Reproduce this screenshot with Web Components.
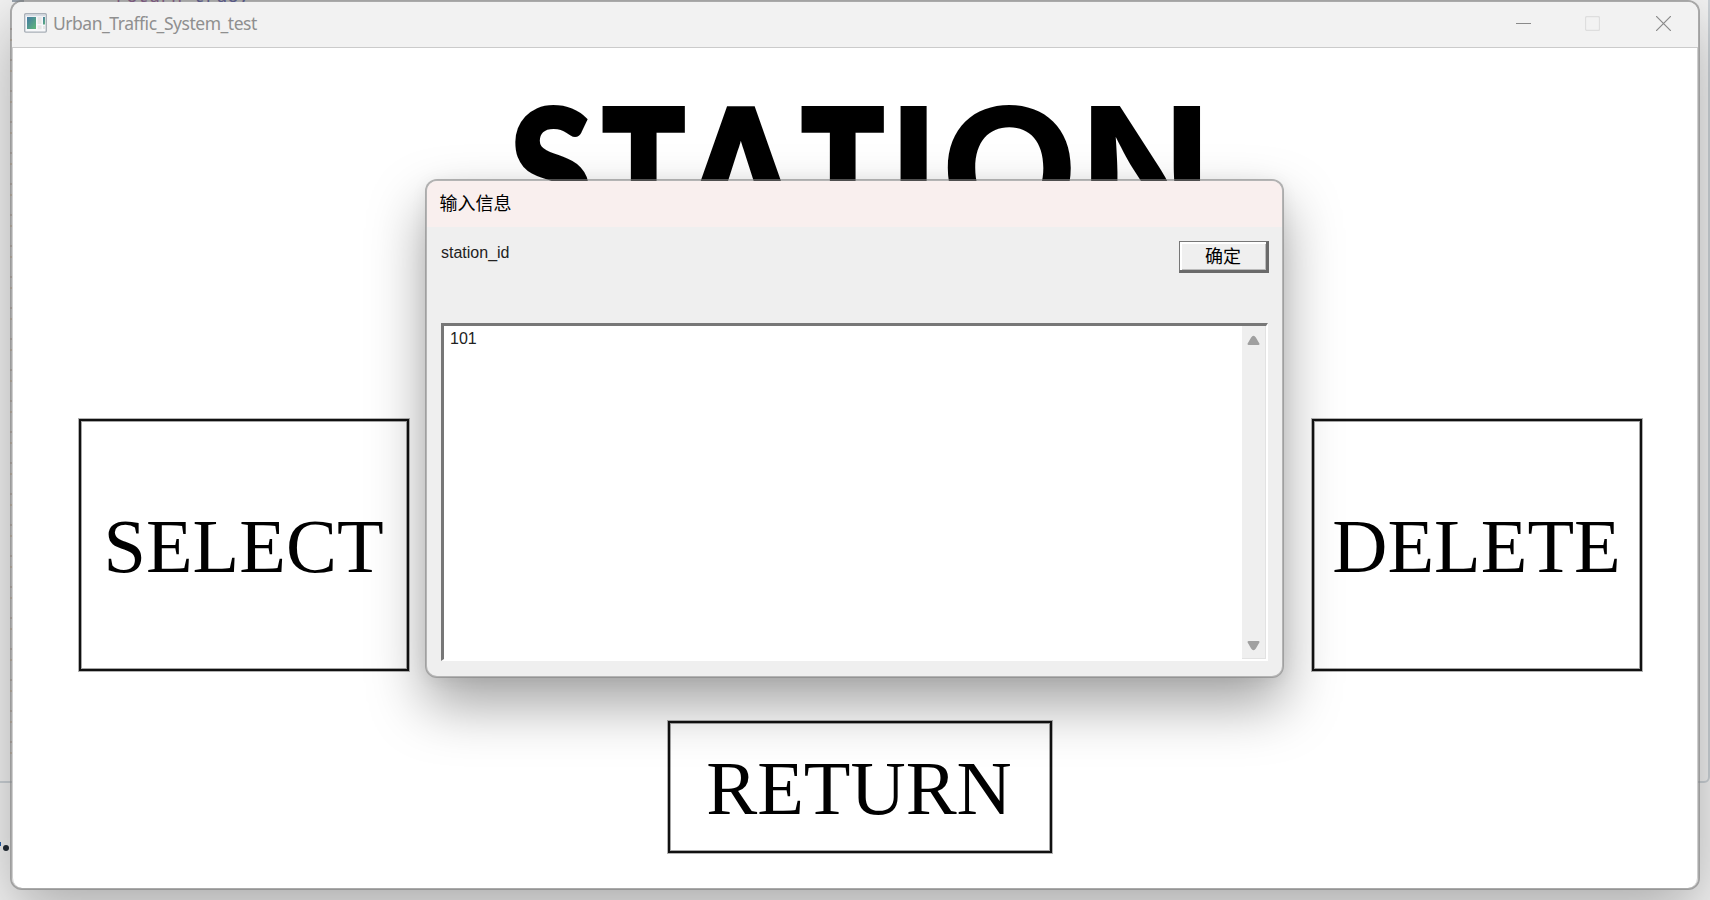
<!DOCTYPE html>
<html lang="zh-CN">
<head>
<meta charset="utf-8">
<title>Urban_Traffic_System_test</title>
<style>
html,body{margin:0;height:100%;overflow:hidden}
body{font-family:"Liberation Sans","Noto Sans CJK SC",sans-serif;background:#f4f4f4}
</style>
</head>
<body>
<desk-top>
  <app-window caption="Urban_Traffic_System_test">
    <station-heading slot="heading" text="STATION"></station-heading>
    <menu-box slot="row" style="--w:330px;--h:252px;--drop:4px">SELECT</menu-box>
    <menu-box slot="row" style="--w:330px;--h:252px;--drop:4px">DELETE</menu-box>
    <menu-box slot="foot" style="--w:384px;--h:132px;--drop:4px">RETURN</menu-box>
  </app-window>
  <input-dialog slot="over" caption="输入信息" label="station_id" value="101">确定</input-dialog>
</desk-top>
<script>
const mount=(el,html)=>{const t=document.createElement('template');t.innerHTML=html;const r=el.attachShadow({mode:'open'});r.append(t.content.cloneNode(true));return r;};

customElements.define('desk-top',class extends HTMLElement{
  constructor(){super();mount(this,`<style>
  :host{display:block;position:relative;width:1710px;height:900px;overflow:hidden;background:#f4f4f4}
  .code{position:absolute;left:115px;top:-12px;font:18.7px/18px "Liberation Mono",monospace;color:#7b2080;white-space:pre}
  .code b{font-weight:400;color:#20209a}
  .tab{position:absolute;left:12px;top:0;width:12px;height:2px;background:#9aa4ae}
  .panel{position:absolute;left:-20px;top:-20px;width:1726px;height:799px;border:2px solid #cdd3d8;border-radius:0 0 6px 6px}
  .dot{position:absolute;left:3px;top:845px;width:6px;height:6px;border-radius:50%;background:#222b35}
  .tick{position:absolute;left:0;top:842px;width:1px;height:4px;background:#2a60a8}
  ::slotted(input-dialog){position:absolute;left:425px;top:179px}
  ::slotted(app-window){position:absolute;left:10px;top:0}
  .marks{position:absolute;left:10px;top:28px;width:2px;height:732px;background:repeating-linear-gradient(#8c8078 0 2px,transparent 2px 11px,#9b8a76 11px 13px,transparent 13px 31px);opacity:.5}
  </style><div class="panel"></div><div class="code">return <b>true;</b></div><div class="tab"></div><div class="dot"></div><div class="tick"></div><slot></slot><div class="marks"></div><slot name="over"></slot>`);}
});

customElements.define('app-window',class extends HTMLElement{
  constructor(){super();const r=mount(this,`<style>
  :host{display:flex;flex-direction:column;box-sizing:border-box;width:1690px;height:890px;border:2px solid rgba(125,125,125,.62);border-radius:12px;background:#fff;background-clip:padding-box;box-shadow:0 22px 64px rgba(0,0,0,.30)}
  header{display:flex;align-items:center;box-sizing:border-box;height:46px;padding-left:12px;background:#f2f2f2;border-bottom:1px solid #cbcbcb;border-radius:10px 10px 0 0;flex:none}
  .title{font:17.5px/24px "Noto Sans",sans-serif;color:#8f8f8f;margin:-3px 0 0 6px;letter-spacing:-.47px;flex:1;white-space:nowrap}
  .icon{display:block;margin-top:-3px}
  .ctl{display:flex;padding-right:27px;margin-top:-2px}
  .ctl svg{display:block;margin-left:54px}
  .ctl svg:last-child{margin-left:56px}
  main{flex:1;display:flex;flex-direction:column;border:solid #cfcfcf;border-width:0 1px;border-radius:0 0 10px 10px}
  .head{height:371px}
  .row{display:flex;justify-content:space-between;padding:0 55px 0 66px}
  .foot{display:flex;justify-content:center;padding:50px 0 0 9px}
  </style>
  <header><svg class="icon" width="23" height="20" viewBox="0 0 23 20"><defs><linearGradient id="g" x1="0" y1="0" x2="1" y2="1"><stop offset="0" stop-color="#4479a5"/><stop offset="1" stop-color="#5fb878"/></linearGradient></defs><rect x=".7" y=".7" width="21.6" height="18.4" rx="1" fill="#f7f8fa" stroke="#a9b0b8" stroke-width="1.4"/><path d="M2 2.5H21" stroke="#d5dbe2" stroke-width="1.5"/><rect x="3" y="4" width="9" height="12" fill="url(#g)"/><rect x="13.6" y="4" width="4" height="7" fill="#e6e6e6"/><rect x="13.6" y="12.3" width="4" height="4" fill="#e6e6e6"/><rect x="19" y="4" width="2" height="7.5" fill="url(#g)"/><rect x="19" y="13" width="2" height="3" fill="#e6e6e6"/></svg>
  <span class="title"></span>
  <div class="ctl"><svg width="15" height="15"><path d="M0 7.5H15" stroke="#8a8a8a"/></svg><svg width="15" height="15"><rect x=".5" y=".5" width="14" height="14" rx="1.5" fill="none" stroke="#dedede" stroke-width="1.3"/></svg><svg width="15" height="15"><path d="M0 0L15 15M15 0L0 15" stroke="#8a8a8a" stroke-width="1.2"/></svg></div></header>
  <main><div class="head"><slot name="heading"></slot></div><div class="row"><slot name="row"></slot></div><div class="foot"><slot name="foot"></slot></div></main>`);
  r.querySelector('.title').textContent=this.getAttribute('caption');}
});

/* Poster lettering: every letter is fitted to the ink size given for it. */
customElements.define('station-heading',class extends HTMLElement{
  constructor(){super();const r=mount(this,`<style>
  :host{display:block;padding:58px 0 0 498px;color:#000}
  .line{display:flex;height:122px}
  .cell{flex:none;height:122px}
  .cell span{display:block;width:max-content;line-height:122px;font-size:168px;transform-origin:0 0}
  </style><div class="line"></div>`);
  /* ink width, gap after, weight, family, stroke, ink height */
  const fit=[[79,11.5,900,'Lato',4,127],[83,-4.5,900,'Inter',0,122],[122,-1.5,900,'Lato',4,135],[83,16,900,'Inter',0,122],[27,20,800,'Inter',0,122],[124,20.5,700,'Inter',0,126],[109,0,700,'Inter',0,122]];
  const line=r.querySelector('.line'),c=document.createElement('canvas').getContext('2d');
  [...this.getAttribute('text')].forEach((ch,i)=>{
    const [width,gap,weight,family,stroke,h]=fit[i];
    c.font=weight+' 168px '+family;
    const m=c.measureText(ch),w=m.actualBoundingBoxLeft+m.actualBoundingBoxRight+stroke;
    const cap=m.actualBoundingBoxAscent+m.actualBoundingBoxDescent+stroke,round='SO'.includes(ch);
    const sx=width/w,sy=h/cap;
    const base=61+(m.fontBoundingBoxAscent-m.fontBoundingBoxDescent)/2;
    const cell=document.createElement('div'),s=document.createElement('span');
    cell.className='cell';cell.style.cssText='width:'+width+'px;margin-right:'+gap+'px';
    s.textContent=ch;
    s.style.fontFamily=family;s.style.fontWeight=weight;
    if(stroke)s.style.webkitTextStroke=stroke+'px #000';
    s.style.transform='matrix('+sx+',0,0,'+sy+','+((m.actualBoundingBoxLeft+stroke/2)*sx)+','+((round?-1:0)-(base-m.actualBoundingBoxAscent-stroke/2)*sy)+')';
    cell.append(s);line.append(cell);
  });}
});

customElements.define('menu-box',class extends HTMLElement{
  constructor(){super();mount(this,`<style>
  :host{display:flex;align-items:center;justify-content:center;box-sizing:border-box;width:var(--w);height:var(--h);border:2px solid #111;outline:1px solid rgba(0,0,0,.3);box-shadow:inset 0 0 0 1px rgba(0,0,0,.35);font:76.4px/80px "Liberation Serif",serif;font-kerning:none;color:#000}
  span{display:block;padding:var(--drop) 1px 0 0}
  </style><span><slot></slot></span>`);}
});

customElements.define('input-dialog',class extends HTMLElement{
  constructor(){super();const r=mount(this,`<style>
  :host{display:flex;flex-direction:column;box-sizing:border-box;width:859px;height:499px;border:2px solid rgba(130,130,130,.6);border-radius:12px;background:#efefef;background-clip:padding-box;box-shadow:0 27px 56px rgba(0,0,0,.36),0 2px 16px rgba(0,0,0,.06);color:#000}
  header{box-sizing:border-box;height:46px;padding:8px 12.5px;background:#f9efee;border-radius:10px 10px 0 0;font:18px/26px "Noto Sans CJK SC",sans-serif}
  .top{display:flex;justify-content:space-between;align-items:flex-start;height:96px;padding:14px 13px 0 14px;box-sizing:border-box}
  .label{font:16px/20px "Liberation Sans",sans-serif;color:#222;margin-top:1.5px}
  button{display:flex;align-items:center;justify-content:center;box-sizing:border-box;width:90px;height:32px;margin:0;padding:0 0 2px;background:#efefef;border:1px solid #777;border-right:3px solid #6a6a6a;border-bottom:3px solid #6a6a6a;box-shadow:inset 2px 2px #fff,inset -1px -1px #bbb;font:18px/26px "Noto Sans CJK SC",sans-serif;color:#000}
  .field{display:flex;box-sizing:border-box;height:338px;margin:0 14px 0 14px;border:solid;border-width:3px 2px 2px 3px;border-color:#777 #fff #fff #777;background:#fff}
  .value{flex:1;padding:3px 6px;font:16px/20px "Liberation Sans",sans-serif;color:#222}
  .bar{display:flex;flex-direction:column;justify-content:space-between;align-items:center;width:24px;padding:9px 0 7px;box-sizing:border-box;background:#efefef;border-right:1px solid #e2e2e2;border-bottom:1px solid #e2e2e2}
  .bar svg{display:block}
  </style><header></header><div class="top"><span class="label"></span><button><slot></slot></button></div>
  <div class="field"><div class="value"></div><div class="bar"><svg width="13" height="10"><path d="M1.5 9H11.5L8 3Q6.5 .5 5 3Z" fill="#a0a0a0" stroke="#a0a0a0" stroke-width="2" stroke-linejoin="round"/></svg><svg width="13" height="10"><path d="M1.5 1H11.5L8 7Q6.5 9.5 5 7Z" fill="#a0a0a0" stroke="#a0a0a0" stroke-width="2" stroke-linejoin="round"/></svg></div></div>`);
  r.querySelector('header').textContent=this.getAttribute('caption');
  r.querySelector('.label').textContent=this.getAttribute('label');
  r.querySelector('.value').textContent=this.getAttribute('value');}
});
</script>
</body>
</html>
